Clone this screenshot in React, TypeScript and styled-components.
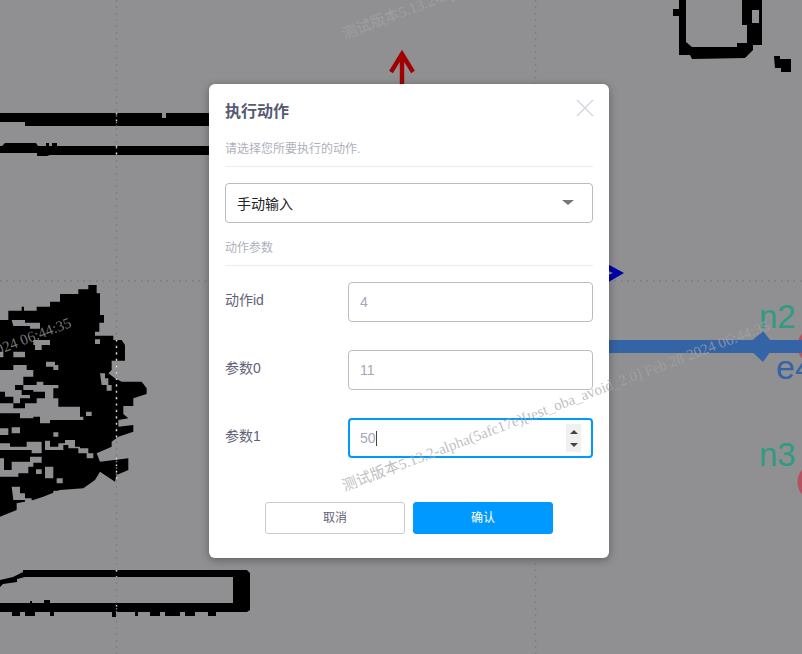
import styled, { createGlobalStyle } from "styled-components";

const GlobalStyle = createGlobalStyle`
  html, body {
    margin: 0;
    padding: 0;
    background: #909092;
  }
  * {
    box-sizing: border-box;
  }
`;

const FONT = `"Liberation Sans", "Noto Sans CJK SC", sans-serif`;

const Page = styled.div`
  position: relative;
  width: 802px;
  height: 654px;
  overflow: hidden;
  background: #909092;
  font-family: ${FONT};
`;

const MapCanvas = styled.svg`
  position: absolute;
  inset: 0;
  width: 802px;
  height: 654px;
`;

const Overlay = styled.div`
  position: absolute;
  inset: 0;
  padding: 84px 0 0 209px;
`;

const Dialog = styled.div`
  position: relative;
  width: 400px;
  height: 474px;
  padding: 16px 16px 24px;
  background: #fff;
  border-radius: 6px;
  box-shadow: 0 2px 8px rgba(0, 0, 0, 0.35);
`;

const CloseButton = styled.button`
  position: absolute;
  top: 15px;
  right: 15px;
  width: 18px;
  height: 18px;
  padding: 0;
  border: none;
  background: none;
  line-height: 0;
`;

const Title = styled.div`
  font-size: 16px;
  line-height: 24px;
  font-weight: bold;
  color: #565a72;
`;

const SectionHint = styled.div<{ $top: number }>`
  margin-top: ${(p) => p.$top}px;
  padding-bottom: 8px;
  font-size: 12px;
  line-height: 18px;
  color: #aeb0bd;
  border-bottom: 1px solid #ececf0;
`;

const SelectBox = styled.div`
  display: flex;
  align-items: center;
  justify-content: space-between;
  height: 40px;
  margin-top: 16px;
  padding: 0 18px 1px 11px;
  border: 1px solid #bcbcc0;
  border-radius: 4px;
  font-size: 14px;
  color: #222;
`;

const Caret = styled.span`
  width: 0;
  height: 0;
  border-left: 6px solid transparent;
  border-right: 6px solid transparent;
  border-top: 5px solid #777;
`;

const Form = styled.div`
  display: flex;
  flex-direction: column;
  gap: 28px;
  margin-top: 16px;
`;

const Row = styled.div`
  display: flex;
  justify-content: space-between;
  height: 40px;
`;

const Label = styled.div`
  font-size: 14px;
  line-height: 36px;
  color: #5f6279;
`;

const ValueInput = styled.input`
  width: 245px;
  height: 40px;
  padding: 0 11px;
  border: 1px solid #bcbcc0;
  border-radius: 4px;
  outline: none;
  font-family: ${FONT};
  font-size: 14px;
  color: #a4a6ba;
`;

const FocusedField = styled.div`
  display: flex;
  align-items: center;
  justify-content: space-between;
  width: 245px;
  height: 40px;
  padding: 0 10px;
  border: 2px solid #0099ff;
  border-radius: 4px;
  font-size: 14px;
  color: #a4a6ba;
`;

const TextCursor = styled.span`
  display: inline-block;
  width: 1px;
  height: 15px;
  vertical-align: -3px;
  background: #444;
`;

const Spinner = styled.div`
  display: flex;
  flex-direction: column;
  align-items: center;
  justify-content: space-between;
  width: 15px;
  height: 28px;
  padding: 6px 0 5px;
  background: #f0f0f0;
`;

const SpinUp = styled.span`
  width: 0;
  height: 0;
  border-left: 4px solid transparent;
  border-right: 4px solid transparent;
  border-bottom: 4px solid #444;
`;

const SpinDown = styled.span`
  width: 0;
  height: 0;
  border-left: 4px solid transparent;
  border-right: 4px solid transparent;
  border-top: 4px solid #444;
`;

const Footer = styled.div`
  display: flex;
  justify-content: center;
  gap: 8px;
  margin-top: 44px;
`;

const ActionButton = styled.button<{ $primary?: boolean }>`
  width: 140px;
  height: 32px;
  padding: 0 0 3px;
  border: 1px solid ${(p) => (p.$primary ? "#0099ff" : "#c9c9d2")};
  border-radius: 3px;
  background: ${(p) => (p.$primary ? "#0099ff" : "#fff")};
  color: ${(p) => (p.$primary ? "#fff" : "#5f6279")};
  font-family: ${FONT};
  font-size: 12px;
`;

const Watermark = styled.div<{ $x: number; $y: number }>`
  position: absolute;
  left: ${(p) => p.$x}px;
  top: ${(p) => p.$y}px;
  font-family: "Liberation Serif", "Noto Sans CJK SC", serif;
  font-size: 15px;
  line-height: 18px;
  white-space: nowrap;
  color: rgba(165, 165, 165, 0.72);
  transform: rotate(-20.8deg);
  transform-origin: 0 100%;
  pointer-events: none;
`;

const WATERMARK_TEXT =
  "测试版本5.13.2-alpha(5afc17e)[test_oba_avoid_2.0] Feb 28 2024 06:44:35";

// traced from the occupancy map, in 3x coordinates
const BLOB =
  "M0 150H25V122H65V110H72V122H110V110H150V95H180V72H235V58H265V45H290V70H300V135H312V158H298V185H285V197H340V210H365L375 225V272H335V300L325 310L345 325L365 335H425L440 355V372L400 385V408H370V432L385 445L355 450V470L400 465V485L355 500L335 515V530L290 550L300 575L385 565V600L350 615L345 635L300 605L285 630L250 655L180 660L130 680L100 690L50 700V720L0 740Z";

const BLOB_HOLES = [
  "M35 150H75V158H120V176H90V168H40Z",
  "M100 210H150V225H125V240H105V225H100ZM40 245H75V262H40ZM0 245H10V262H0Z",
  "M0 300H40V285H80V300H100V320H70V345H45V360H65V375H90V385H60V400H40V380H15V365H0Z",
  "M70 345H110V335H130V345H175V355H160V385H175V410H240V440H250V450H150V460H120V440H100V445H60V430H0V400H40V415H75V400H110V385H135V365H100V360H70Z",
  "M0 475H25V495H0ZM35 472H60V490H35ZM160 487H175V500H160Z",
  "M0 520H30V530H80V515H125V550H95V540H0Z",
  "M135 512H150V530H175V520H195V510H225V530H240V535H265V550H280V565H260V550H235V535H205V525H190V540H135Z",
  "M0 565H12V600H35V575H90V560H125V578H100V590H85V610H55V620H0Z",
  "M108 598H125V612H108ZM135 590H160V625H135ZM170 625H188V640H170ZM160 662H175V678H160Z",
  "M35 650H60V670H75V685H95V698H75V690H40Z",
  "M258 425H275V438H258ZM285 208H300V222H285Z",
  "M300 310H315V325H325V345H335V362H320V345H305Z",
  "M138 275H165V285H175V300H160V290H138Z",
];

function OccupancyMap() {
  return (
    <g fill="#000" filter="url(#mapSoften)">
      {/* top-left walls */}
      <path d="M0 113H209V126H25V122H0Z" />
      <path d="M162 113H166V118H162Z" fill="#909092" />
      <path d="M2 146L5 143H36L38 146H46V143H49V146H52V143H57V146H209V155H50L47 156H37V153H0V146Z" />

      {/* top-right room */}
      <path d="M679 0H686V42L692 47H737V43H747V25H742V0H762V45H753V50L745 58L692 59L690 55H679Z" />
      <path d="M752 10H759V23H752Z" fill="#909092" />
      <path d="M774 56H780V59H791V72H781V68H775Z" />
      <path d="M673 9H679V16H673Z" />

      {/* bottom-left room */}
      <path d="M0 580L13 577L23 572V570H247L250 573V610L247 612H0V603H30V601H32V603H44V600H50V603H233V577H25L17 579V582L3 584L0 587Z" />
      <path d="M12 612H20V616H12ZM25 612H35V616H25ZM50 612H54V616H50ZM112 612H116V617H112ZM135 612H138V616H135ZM150 612H160V616H150ZM165 612H180V616H165ZM185 612H195V616H185ZM208 612H216V616H208Z" />

      {/* obstacle cloud */}
      <g transform="translate(0 270) scale(0.3333)">
        <path d={BLOB} />
        {BLOB_HOLES.map((d) => (
          <path key={d} d={d} fill="#909092" />
        ))}
      </g>
    </g>
  );
}

function GridLines() {
  return (
    <g fill="none" strokeWidth="1.4" strokeDasharray="1.6 4.8">
      <path d="M116.5 0V654M535.5 0V654M0 281H802" stroke="#7b7b7d" />
      {/* dots read light where they cross the black walls */}
      <path
        d="M116.5 113V126M116.5 146V155M116.5 340V441M116.5 458V480M116.5 570V577M116.5 605V612"
        stroke="#e4e4e4"
      />
    </g>
  );
}

function MapEntities() {
  return (
    <>
      {/* heading arrow */}
      <g fill="none" stroke="#a00000" strokeWidth="4.4">
        <path d="M391 72L402 54L413 72" />
        <path d="M402 56V90" />
      </g>

      {/* robot marker */}
      <path
        d="M600 260L624 273L600 287ZM604 269V277L613 273Z"
        fill="#0000aa"
        fillRule="evenodd"
      />

      {/* nodes */}
      <circle cx="817" cy="346" r="17" fill="none" stroke="#b3525e" strokeWidth="5" />
      <circle cx="817" cy="482" r="17" fill="none" stroke="#b3525e" strokeWidth="5" />

      <g fontFamily="Liberation Sans, Arial, sans-serif" fontSize="33">
        <text x="759" y="328" fill="#2f9b82">n2</text>
        <text x="776" y="379" fontSize="34" fill="#3463a6">e4</text>
        <text x="759" y="466" fill="#2f9b82">n3</text>
      </g>

      {/* edge e4 */}
      <path d="M600 340H802V353H600Z" fill="#3463a6" />
      <path d="M746 346L763 331L770 340V352L763 362Z" fill="#3463a6" />
    </>
  );
}

export default function App(): JSX.Element {
  return (
    <Page>
      <GlobalStyle />
      <MapCanvas viewBox="0 0 802 654">
        <defs>
          <filter id="mapSoften" x="0" y="0" width="100%" height="100%">
            <feGaussianBlur stdDeviation="0.7" />
          </filter>
        </defs>
        <OccupancyMap />
        <GridLines />
        <MapEntities />
      </MapCanvas>
      <Overlay>
        <Dialog>
          <CloseButton aria-label="close">
            <svg width="18" height="18" viewBox="0 0 18 18">
              <path
                d="M1 1L17 17M17 1L1 17"
                stroke="#d6d8df"
                strokeWidth="1.5"
                fill="none"
              />
            </svg>
          </CloseButton>
          <Title>执行动作</Title>
          <SectionHint $top={16}>请选择您所要执行的动作.</SectionHint>
          <SelectBox>
            手动输入
            <Caret />
          </SelectBox>
          <SectionHint $top={16}>动作参数</SectionHint>
          <Form>
            <Row>
              <Label>动作id</Label>
              <ValueInput readOnly value="4" />
            </Row>
            <Row>
              <Label>参数0</Label>
              <ValueInput readOnly value="11" />
            </Row>
            <Row>
              <Label>参数1</Label>
              <FocusedField>
                <span>
                  50
                  <TextCursor />
                </span>
                <Spinner>
                  <SpinUp />
                  <SpinDown />
                </Spinner>
              </FocusedField>
            </Row>
          </Form>
          <Footer>
            <ActionButton>取消</ActionButton>
            <ActionButton $primary>确认</ActionButton>
          </Footer>
        </Dialog>
      </Overlay>
      <Watermark $x={346} $y={477}>{WATERMARK_TEXT}</Watermark>
      <Watermark $x={346} $y={25}>{WATERMARK_TEXT}</Watermark>
      <Watermark $x={-352} $y={474}>{WATERMARK_TEXT}</Watermark>
    </Page>
  );
}
